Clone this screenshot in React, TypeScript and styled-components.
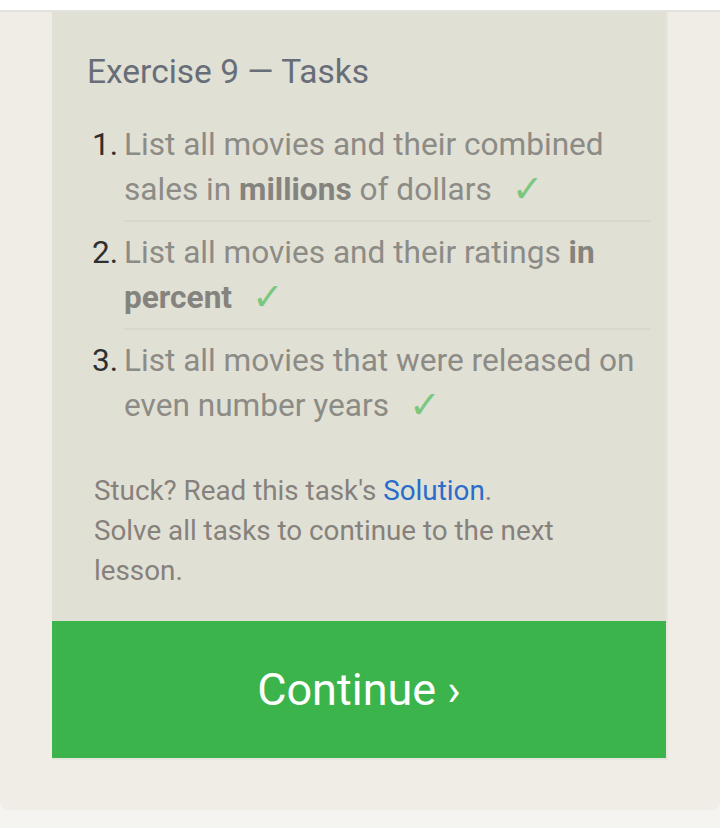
import React from "react";
import styled, { createGlobalStyle } from "styled-components";

const Global = createGlobalStyle`
  html, body { margin: 0; padding: 0; background: #f5f4f0; }
  body { font-family: Roboto, "Liberation Sans", sans-serif; }
`;

const Page = styled.div`
  width: 720px;
  height: 828px;
  background: #f5f4f0;
  display: flex;
  flex-direction: column;
`;

const TopStrip = styled.div`
  height: 10px;
  background: #ffffff;
`;

const Card = styled.div`
  background: #efede6;
  border-top: 2px solid #e3e3dd;
  border-radius: 0 0 9px 9px;
  padding: 0 52px 50px 52px;
`;

const Panel = styled.section`
  background: #e1e0d5;
  border-right: 2px solid #e7e6de;
  border-bottom: 2px solid #e7e6de;
  display: flex;
  flex-direction: column;
`;

const Title = styled.h2`
  margin: 40px 0 0 35px;
  font-size: 33.5px;
  line-height: 40px;
  font-weight: 400;
  color: #686e78;
`;

const TaskList = styled.ol`
  list-style: none;
  margin: 22px 16px 0 35px;
  padding: 0;
`;

const Task = styled.li`
  display: grid;
  grid-template-columns: 37px 1fr;
  font-size: 31.6px;
  line-height: 45px;
  & + & > div {
    border-top: 2px solid #d8d7cc;
    padding-top: 8px;
  }
  & + & > span {
    padding-top: 10px;
  }
`;

const Num = styled.span`
  color: #2f2f2f;
  text-align: right;
  padding-right: 6px;
  padding-top: 8px;
`;

const TaskBody = styled.div`
  color: #8c8b86;
  padding-top: 8px;
  padding-bottom: 8px;
  & b {
    color: #84837e;
    font-weight: 700;
  }
`;

const Check = styled.span`
  color: #7cc77f;
  font-family: "DejaVu Sans", sans-serif;
  font-size: 38px;
  line-height: 0;
  margin-left: 20px;
  vertical-align: -2px;
`;

const Help = styled.p`
  margin: 35px 0 0 42px;
  width: 515px;
  font-size: 27.8px;
  line-height: 40px;
  color: #86817c;
`;

const Link = styled.a`
  color: #2a6ccc;
  text-decoration: none;
`;

const ContinueButton = styled.button`
  margin-top: 30px;
  height: 137px;
  border: none;
  background: #3bb54b;
  color: #ffffff;
  font-family: Roboto, "Liberation Sans", sans-serif;
  font-size: 45px;
  font-weight: 400;
  cursor: pointer;
  display: flex;
  align-items: center;
  justify-content: center;
  padding: 0;
`;

const tasks: React.ReactNode[] = [
  <>List all movies and their combined sales in <b>millions</b> of dollars</>,
  <>List all movies and their ratings <b>in percent</b></>,
  <>List all movies that were released on even number years</>,
];

export default function App() {
  return (
    <Page>
      <Global />
      <TopStrip />
      <Card>
        <Panel>
          <Title>Exercise 9 — Tasks</Title>
          <TaskList>
            {tasks.map((t, i) => (
              <Task key={i}>
                <Num>{i + 1}.</Num>
                <TaskBody>
                  {t}
                  <Check>✓</Check>
                </TaskBody>
              </Task>
            ))}
          </TaskList>
          <Help>
            Stuck? Read this task's <Link href="#">Solution</Link>.
            <br />
            Solve all tasks to continue to the next lesson.
          </Help>
          <ContinueButton>Continue ›</ContinueButton>
        </Panel>
      </Card>
    </Page>
  );
}
